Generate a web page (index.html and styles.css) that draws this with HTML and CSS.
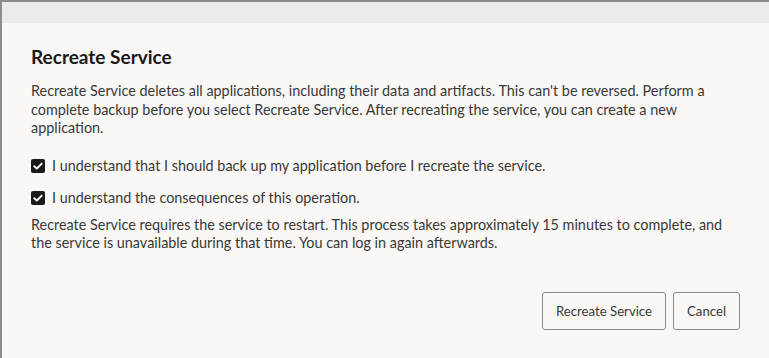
FILE: index.html
```html
<!DOCTYPE html>
<html lang="en">
<head>
  <meta charset="UTF-8">
  <title>Recreate Service</title>
  <link rel="stylesheet" href="styles.css">
</head>
<body>
  <div class="dialog">
    <div class="dialog-top"></div>
    <div class="dialog-body">
      <h1>Recreate Service</h1>
      <p class="intro">Recreate Service deletes all applications, including their data and artifacts. This can't be reversed. Perform a complete backup before you select Recreate Service. After recreating the service, you can create a new application.</p>

      <!-- Confirmations -->
      <label class="check">
        <span class="box"><svg viewBox="0 0 14 14" width="14" height="14"><path d="M3.3 7.2 L5.8 9.6 L10.7 4.6" fill="none" stroke="#fff" stroke-width="1.9" stroke-linecap="round" stroke-linejoin="round"/></svg></span>
        I understand that I should back up my application before I recreate the service.
      </label>
      <label class="check">
        <span class="box"><svg viewBox="0 0 14 14" width="14" height="14"><path d="M3.3 7.2 L5.8 9.6 L10.7 4.6" fill="none" stroke="#fff" stroke-width="1.9" stroke-linecap="round" stroke-linejoin="round"/></svg></span>
        I understand the consequences of this operation.
      </label>

      <p class="note">Recreate Service requires the service to restart. This process takes approximately 15 minutes to complete, and the service is unavailable during that time. You can log in again afterwards.</p>
    </div>

    <div class="buttons">
      <button type="button">Recreate Service</button>
      <button type="button">Cancel</button>
    </div>
  </div>
</body>
</html>
```

FILE: styles.css
```css
* {
  margin: 0;
  padding: 0;
  box-sizing: border-box;
}

body {
  font-family: 'Lato', sans-serif;
  background-color: #f9f8f6;
  color: #3a3936;
  width: 769px;
  height: 358px;
  overflow: hidden;
}

.dialog {
  height: 358px;
  border-top: 2px solid #8d8c8a;
  border-left: 2px solid #8d8c8a;
  display: flex;
  flex-direction: column;
}

.dialog-top {
  height: 21px;
  background-color: #ebebea;
}

.dialog-body {
  padding: 22px 40px 0 29px;
  flex: 1;
}

h1 {
  font-size: 19px;
  font-weight: 700;
  color: #1a1918;
  line-height: 24px;
  margin-bottom: 13px;
}

.intro,
.note {
  font-size: 14.4px;
  line-height: 18.5px;
}

.intro {
  margin-bottom: 19px;
}

.check {
  display: flex;
  align-items: center;
  font-size: 14.4px;
  line-height: 18px;
  margin-bottom: 14px;
}

.check:last-of-type {
  margin-bottom: 9px;
}

.check .box {
  width: 14px;
  height: 14px;
  background-color: #1a1918;
  border-radius: 2px;
  margin-right: 7px;
  display: flex;
}

.buttons {
  display: flex;
  justify-content: flex-end;
  gap: 7px;
  padding: 0 29px 28px 0;
}

.buttons button {
  font-family: inherit;
  font-size: 13.2px;
  color: #3a3936;
  background-color: #f9f8f6;
  border: 1px solid #8d8c8a;
  border-radius: 3px;
  height: 38px;
  padding: 0 13px;
  cursor: pointer;
}
```
